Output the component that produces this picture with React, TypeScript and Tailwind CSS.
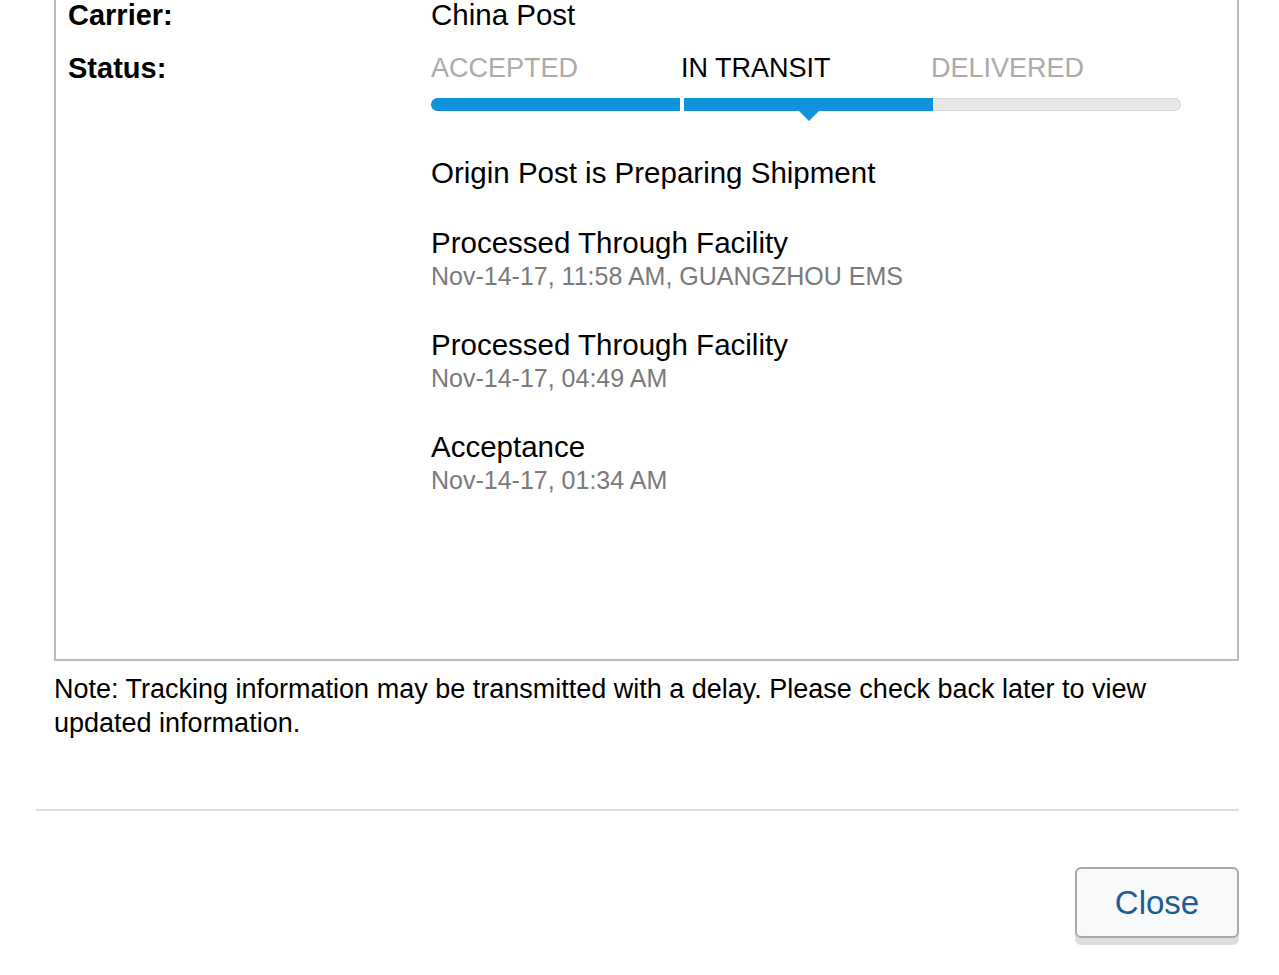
const events = [
  { title: "Origin Post is Preparing Shipment" },
  { title: "Processed Through Facility", detail: "Nov-14-17, 11:58 AM, GUANGZHOU EMS" },
  { title: "Processed Through Facility", detail: "Nov-14-17, 04:49 AM" },
  { title: "Acceptance", detail: "Nov-14-17, 01:34 AM" },
];

const steps = ["ACCEPTED", "IN TRANSIT", "DELIVERED"];

function StatusBar() {
  return (
    <div className="w-[750px]">
      <div className="grid grid-cols-3 text-[27px] leading-[34px]">
        {steps.map((s, i) => (
          <div key={s} className={i === 1 ? "text-black" : "text-[#ababab]"}>
            {s}
          </div>
        ))}
      </div>
      <div className="relative mt-[13px] h-[13px] rounded-full bg-[#e8e8e8] shadow-[inset_0_0_0_1px_#d6d6d6]">
        <div className="absolute left-0 top-0 flex h-[13px] w-[502px]">
          <div className="h-full w-[249px] rounded-l-full bg-[#1192dd]" />
          <div className="h-full w-[4px] bg-white" />
          <div className="h-full w-[249px] bg-[#1192dd]" />
        </div>
        <div className="absolute left-[367px] top-[12px] h-0 w-0 border-x-[11px] border-t-[11px] border-x-transparent border-t-[#1192dd]" />
      </div>
    </div>
  );
}

export default function App() {
  return (
    <div className="min-h-screen bg-white font-['Liberation_Sans',Arial,sans-serif] text-black">
      <div className="ml-[54px] w-[1185px] border-x-2 border-b-2 border-[#bcbcbc] pb-[163px] pl-[12px]">
        <div className="grid grid-cols-[363px_1fr] -mt-[2px] leading-[34px]">
          <div className="text-[29px] font-bold">Carrier:</div>
          <div className="text-[29.5px]">China Post</div>
        </div>
        <div className="mt-[19px] grid grid-cols-[363px_1fr]">
          <div className="text-[29px] font-bold leading-[34px]">Status:</div>
          <div>
            <StatusBar />
            <div className="mt-[45px] flex flex-col gap-[36px]">
              {events.map((e, i) => (
                <div key={i}>
                  <div className="text-[29.5px] leading-[34px]">{e.title}</div>
                  {e.detail && (
                    <div className="text-[25px] leading-[32px] text-[#7a7a7a]">{e.detail}</div>
                  )}
                </div>
              ))}
            </div>
          </div>
        </div>
      </div>
      <p className="ml-[54px] mt-[11px] w-[1180px] text-[27px] leading-[34px]">
        Note: Tracking information may be transmitted with a delay. Please check back later to view
        updated information.
      </p>
      <div className="ml-[36px] mt-[69px] h-[2px] w-[1203px] bg-[#dedede]" />
      <div className="mt-[56px] flex w-[1239px] justify-end">
        <button className="h-[71px] w-[164px] rounded-[6px] border-2 border-[#a9a9a9] bg-[#f8f9fa] text-[33px] text-[#1b5c97] shadow-[0_7px_0_#dedede]">
          Close
        </button>
      </div>
    </div>
  );
}
